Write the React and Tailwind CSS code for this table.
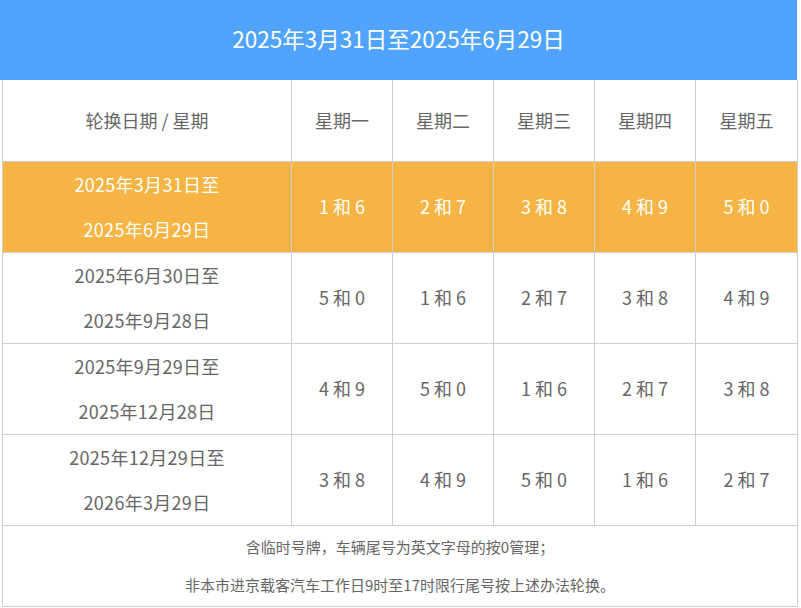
import React from 'react'

const days = ['星期一', '星期二', '星期三', '星期四', '星期五']

const rows = [
  { from: '2025年3月31日至', to: '2025年6月29日', nums: ['1 和 6', '2 和 7', '3 和 8', '4 和 9', '5 和 0'], active: true },
  { from: '2025年6月30日至', to: '2025年9月28日', nums: ['5 和 0', '1 和 6', '2 和 7', '3 和 8', '4 和 9'] },
  { from: '2025年9月29日至', to: '2025年12月28日', nums: ['4 和 9', '5 和 0', '1 和 6', '2 和 7', '3 和 8'] },
  { from: '2025年12月29日至', to: '2026年3月29日', nums: ['3 和 8', '4 和 9', '5 和 0', '1 和 6', '2 和 7'] }
]

export default function App() {
  return (
    <div className="w-[801px] h-[608px] bg-white text-[#666] font-['Microsoft_YaHei','Noto_Sans_CJK_SC',sans-serif]">
      <div className="w-[797px] h-[80px] pb-[3px] bg-[#50a4fd] flex items-center justify-center text-white text-[22.5px]">
        2025年3月31日至2025年6月29日
      </div>
      <table className="ml-[2px] w-[795px] table-fixed border-collapse">
        <colgroup>
          <col className="w-[289px]" />
          <col className="w-[101px]" />
          <col className="w-[101px]" />
          <col className="w-[101px]" />
          <col className="w-[101px]" />
          <col className="w-[102px]" />
        </colgroup>
        <thead>
          <tr className="h-[81px] text-[18px]">
            <th className="font-normal border border-t-0 border-[#cfcfcf]">轮换日期 / 星期</th>
            {days.map(d => (
              <th key={d} className="font-normal border border-t-0 border-[#cfcfcf]">{d}</th>
            ))}
          </tr>
        </thead>
        <tbody>
          {rows.map((r, i) => (
            <tr key={i} className={`h-[91px] text-[18px] ${r.active ? 'bg-[#f5b443] text-white' : ''}`}>
              <td className="border border-[#cfcfcf] text-center leading-[45px] tracking-[0.3px]">
                <div>{r.from}</div>
                <div>{r.to}</div>
              </td>
              {r.nums.map((n, j) => (
                <td key={j} className="border border-[#cfcfcf] text-center">{n}</td>
              ))}
            </tr>
          ))}
          <tr className="h-[81px]">
            <td colSpan={6} className="border border-[#cfcfcf] text-center text-[15px] leading-[38px]">
              <div>含临时号牌，车辆尾号为英文字母的按0管理；</div>
              <div>非本市进京载客汽车工作日9时至17时限行尾号按上述办法轮换。</div>
            </td>
          </tr>
        </tbody>
      </table>
    </div>
  )
}
